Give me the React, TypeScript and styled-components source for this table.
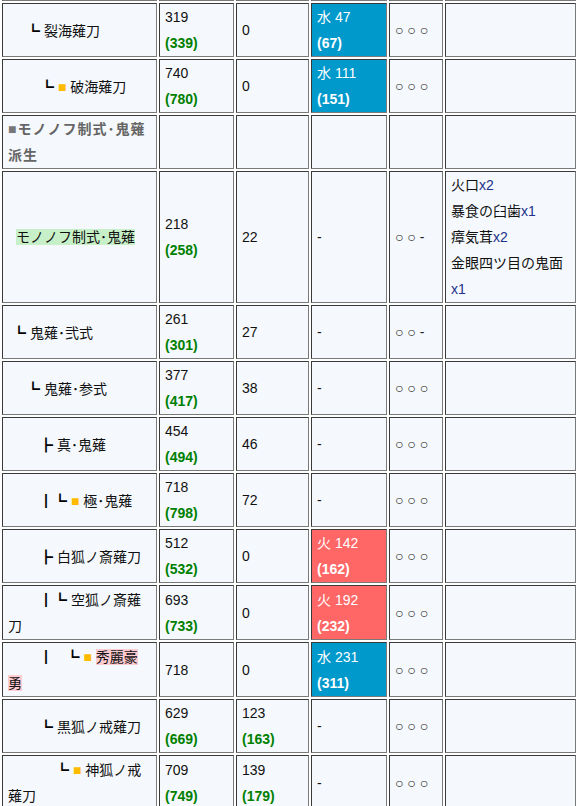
import React from 'react';
import styled, { createGlobalStyle } from 'styled-components';

const GlobalStyle = createGlobalStyle`
  html, body { margin: 0; padding: 0; background: #ffffff; overflow: hidden; }
  body {
    font-family: "Liberation Sans", "Noto Sans CJK JP", sans-serif;
    font-size: 14px;
    color: #111;
  }
`;

const Table = styled.table`
  border-collapse: separate;
  border-spacing: 2px;
  table-layout: fixed;
  width: 578px;
  margin-top: -55px;
`;

const Col = styled.col<{ $w: number }>`
  width: ${(p) => p.$w}px;
`;

type Tone = 'plain' | 'water' | 'fire';

const Cell = styled.td<{ $tone?: Tone }>`
  box-sizing: border-box;
  padding: 0 5px;
  border: 1px solid;
  border-color: #3a3a3a #7a7a7a #7a7a7a #3a3a3a;
  background: ${(p) =>
    p.$tone === 'water' ? '#0099cc' : p.$tone === 'fire' ? '#ff6666' : '#f5f9fd'};
  color: ${(p) => (p.$tone === 'water' || p.$tone === 'fire' ? '#ffffff' : '#111111')};
  line-height: 26px;
  vertical-align: middle;
  overflow: hidden;
`;

const SpacerCell = styled(Cell)`
  height: 54px;
`;

const NameCell = styled(Cell)<{ $indent: number }>`
  text-indent: ${(p) => p.$indent}px;
`;

const Tree = styled.span`
  font-family: "Noto Sans CJK JP", sans-serif;
  color: #000;
`;

const Mark = styled.span<{ $tone: 'gold' | 'gray' }>`
  color: ${(p) => (p.$tone === 'gold' ? '#ffbb00' : '#777777')};
`;

const Highlight = styled.span<{ $tone: 'green' | 'pink' }>`
  background: ${(p) => (p.$tone === 'green' ? '#c8f0c8' : '#ffccd2')};
`;

const GroupLabel = styled.span`
  font-weight: bold;
  color: #666666;
  letter-spacing: 1px;
`;

const Value = styled.span`
  display: block;
`;

const Max = styled.span<{ $light?: boolean }>`
  display: block;
  font-weight: bold;
  color: ${(p) => (p.$light ? '#ffffff' : '#008000')};
`;

const Slots = styled.span`
  color: #222;
`;

const Mat = styled.span`
  display: block;
`;

const Qty = styled.span`
  color: #22318a;
`;

type Elem = { kind: 'water' | 'fire'; v: number; max: number } | null;

type Row = {
  indent: number;
  tree?: string;
  gold?: boolean;
  label: string;
  hl?: 'green' | 'pink';
  atk: number;
  atkMax?: number;
  aff: number;
  affMax?: number;
  elem: Elem;
  slots: string;
  mats?: [string, string][];
};

const rowsTop: Row[] = [
  { indent: 18, tree: '┗', label: '裂海薙刀', atk: 319, atkMax: 339, aff: 0, elem: { kind: 'water', v: 47, max: 67 }, slots: '○ ○ ○' },
  { indent: 32, tree: '┗', gold: true, label: '破海薙刀', atk: 740, atkMax: 780, aff: 0, elem: { kind: 'water', v: 111, max: 151 }, slots: '○ ○ ○' },
];

const rowsBottom: Row[] = [
  {
    indent: 8, label: 'モノノフ制式･鬼薙', hl: 'green', atk: 218, atkMax: 258, aff: 22, elem: null, slots: '○ ○ -',
    mats: [['火口', 'x2'], ['暴食の臼歯', 'x1'], ['瘴気茸', 'x2'], ['金眼四ツ目の鬼面', 'x1']],
  },
  { indent: 4, tree: '┗', label: '鬼薙･弐式', atk: 261, atkMax: 301, aff: 27, elem: null, slots: '○ ○ -' },
  { indent: 18, tree: '┗', label: '鬼薙･参式', atk: 377, atkMax: 417, aff: 38, elem: null, slots: '○ ○ ○' },
  { indent: 31, tree: '┣', label: '真･鬼薙', atk: 454, atkMax: 494, aff: 46, elem: null, slots: '○ ○ ○' },
  { indent: 31, tree: '┃┗', gold: true, label: '極･鬼薙', atk: 718, atkMax: 798, aff: 72, elem: null, slots: '○ ○ ○' },
  { indent: 31, tree: '┣', label: '白狐ノ斎薙刀', atk: 512, atkMax: 532, aff: 0, elem: { kind: 'fire', v: 142, max: 162 }, slots: '○ ○ ○' },
  { indent: 31, tree: '┃┗', label: '空狐ノ斎薙刀', atk: 693, atkMax: 733, aff: 0, elem: { kind: 'fire', v: 192, max: 232 }, slots: '○ ○ ○' },
  { indent: 31, tree: '┃\u00a0\u00a0\u00a0\u00a0┗', gold: true, label: '秀麗豪勇', hl: 'pink', atk: 718, aff: 0, elem: { kind: 'water', v: 231, max: 311 }, slots: '○ ○ ○' },
  { indent: 31, tree: '┗', label: '黒狐ノ戒薙刀', atk: 629, atkMax: 669, aff: 123, affMax: 163, elem: null, slots: '○ ○ ○' },
  { indent: 47, tree: '┗', gold: true, label: '神狐ノ戒薙刀', atk: 709, atkMax: 749, aff: 139, affMax: 179, elem: null, slots: '○ ○ ○' },
];

const Name: React.FC<{ row: Row }> = ({ row }) => (
  <NameCell $indent={row.indent}>
    {row.tree && (
      <>
        <Tree>{row.tree}</Tree>{' '}
      </>
    )}
    {row.gold && (
      <>
        <Mark $tone="gold">■</Mark>{' '}
      </>
    )}
    {row.hl ? <Highlight $tone={row.hl}>{row.label}</Highlight> : row.label}
  </NameCell>
);

const WeaponRow: React.FC<{ row: Row }> = ({ row }) => (
  <tr>
    <Name row={row} />
    <Cell>
      <Value>{row.atk}</Value>
      {row.atkMax !== undefined && <Max>({row.atkMax})</Max>}
    </Cell>
    <Cell>
      <Value>{row.aff}</Value>
      {row.affMax !== undefined && <Max>({row.affMax})</Max>}
    </Cell>
    {row.elem ? (
      <Cell $tone={row.elem.kind}>
        <Value>
          {row.elem.kind === 'water' ? '水' : '火'} {row.elem.v}
        </Value>
        <Max $light>({row.elem.max})</Max>
      </Cell>
    ) : (
      <Cell>-</Cell>
    )}
    <Cell>
      <Slots>{row.slots}</Slots>
    </Cell>
    <Cell>
      {row.mats?.map(([m, q]) => (
        <Mat key={m}>
          {m}
          <Qty>{q}</Qty>
        </Mat>
      ))}
    </Cell>
  </tr>
);

export default function App() {
  return (
    <>
      <GlobalStyle />
      <Table>
        <colgroup>
          <Col $w={155} />
          <Col $w={75} />
          <Col $w={73} />
          <Col $w={76} />
          <Col $w={54} />
          <Col $w={131} />
        </colgroup>
        <tbody>
          <tr>
            <SpacerCell />
            <SpacerCell />
            <SpacerCell />
            <SpacerCell />
            <SpacerCell />
            <SpacerCell />
          </tr>
          {rowsTop.map((r) => (
            <WeaponRow key={r.label} row={r} />
          ))}
          <tr>
            <Cell>
              <GroupLabel>
                <Mark $tone="gray">■</Mark>モノノフ制式･鬼薙派生
              </GroupLabel>
            </Cell>
            <Cell />
            <Cell />
            <Cell />
            <Cell />
            <Cell />
          </tr>
          {rowsBottom.map((r) => (
            <WeaponRow key={r.label} row={r} />
          ))}
        </tbody>
      </Table>
    </>
  );
}
